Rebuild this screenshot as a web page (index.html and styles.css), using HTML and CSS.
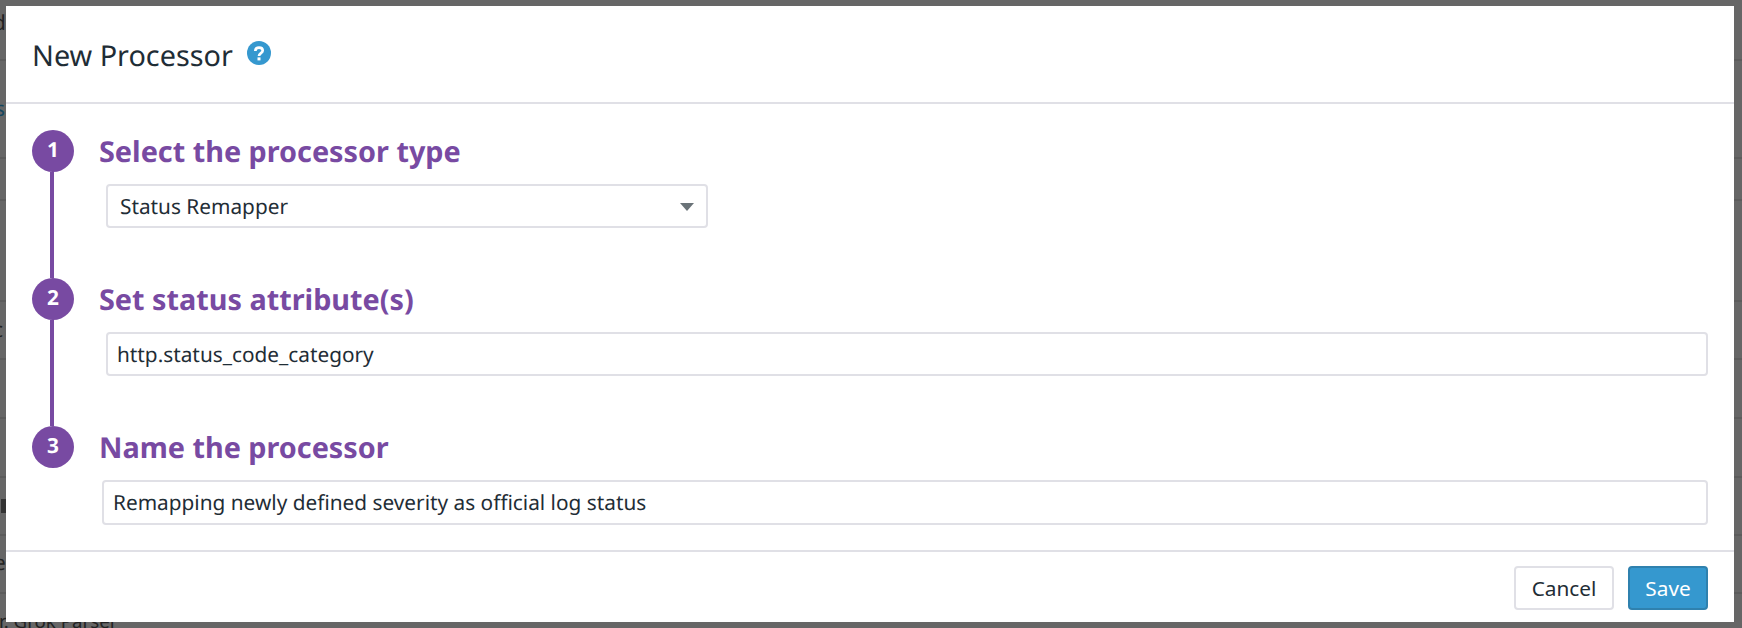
FILE: index.html
```html
<!DOCTYPE html>
<html lang="en">
<head>
    <meta charset="UTF-8">
    <meta name="viewport" content="width=device-width, initial-scale=1.0">
    <title>New Processor</title>
    <link rel="stylesheet" href="styles.css">
</head>
<body>
    <div class="backdrop">
        <span class="peek peek-d">d</span>
        <span class="peek peek-s">s</span>
        <span class="peek peek-c">c</span>
        <span class="peek peek-e">e</span>
        <span class="peek peek-grok">r. Grok Parser</span>
        <i class="peek-box"></i>
        <i class="rule" style="top: 59px"></i>
        <i class="rule" style="top: 157px"></i>
        <i class="rule" style="top: 199px"></i>
        <i class="rule" style="top: 300px"></i>
        <i class="rule" style="top: 358px"></i>
        <i class="rule" style="top: 417px"></i>
        <i class="rule" style="top: 476px"></i>
        <i class="rule" style="top: 534px"></i>
        <i class="rule" style="top: 592px"></i>
    </div>

    <div class="modal">
        <div class="modal-header">
            <h1 class="modal-title">New Processor</h1>
            <svg class="help-icon" viewBox="0 0 24 24" aria-hidden="true">
                <circle cx="12" cy="12" r="12" fill="#3598cf"/>
                <path d="M8.300 9.900c0-2.200 1.600-3.200 3.700-3.200 2.100 0 3.700 1.100 3.700 2.900 0 2.600-3.700 2.500-3.700 5.400" fill="none" stroke="#fff" stroke-width="2.700"/>
                <rect x="10.500" y="16.400" width="3" height="3" fill="#fff"/>
            </svg>
        </div>

        <div class="modal-body">
            <div class="step">
                <div class="step-rail">
                    <div class="step-num">1</div>
                    <div class="step-line"></div>
                </div>
                <div class="step-main">
                    <h2 class="step-title">Select the processor type</h2>
                    <div class="field select-field">
                        <span>Status Remapper</span>
                        <i class="caret"></i>
                    </div>
                </div>
            </div>

            <div class="step">
                <div class="step-rail">
                    <div class="step-num">2</div>
                    <div class="step-line"></div>
                </div>
                <div class="step-main">
                    <h2 class="step-title">Set status attribute(s)</h2>
                    <div class="field">http.status_code_category</div>
                </div>
            </div>

            <div class="step step-last">
                <div class="step-rail">
                    <div class="step-num">3</div>
                </div>
                <div class="step-main">
                    <h2 class="step-title">Name the processor</h2>
                    <div class="field field-name">Remapping newly defined severity as official log status</div>
                </div>
            </div>
        </div>

        <div class="modal-footer">
            <button class="btn">Cancel</button>
            <button class="btn btn-primary">Save</button>
        </div>
    </div>
</body>
</html>
```

FILE: styles.css
```css
* {
    box-sizing: border-box;
}

body {
    margin: 0;
    height: 100vh;
    overflow: hidden;
    position: relative;
    background: #666;
    font-family: "Noto Sans", sans-serif;
    color: #1f2d36;
    text-rendering: geometricPrecision;
}

/* page behind the dimmed overlay */
.backdrop {
    position: absolute;
    top: 0;
    left: 0;
    width: 100%;
    height: 100%;
}

.rule {
    position: absolute;
    left: 0;
    width: 100%;
    height: 2px;
    background: #5c5c5c;
}

.peek {
    position: absolute;
    font-size: 20.8px;
    line-height: 24px;
    color: #222;
}

.peek-d { left: -7px; top: 11px; }
.peek-s { left: -5px; top: 97px; color: #14465f; }
.peek-c { left: -7px; top: 318px; }
.peek-e { left: -6px; top: 551px; }
.peek-grok { left: -1px; top: 610px; font-size: 18.7px; }

.peek-box {
    position: absolute;
    left: 1px;
    top: 499px;
    width: 5px;
    height: 14px;
    background: #333;
}

.modal {
    position: absolute;
    top: 6px;
    left: 6px;
    width: 1728px;
    height: 616px;
    display: flex;
    flex-direction: column;
    background: #fff;
}

.modal-header {
    display: flex;
    align-items: center;
    height: 98px;
    padding: 0 26px;
    border-bottom: 2px solid #e0e0e6;
}

.modal-title {
    margin: 4px 0 0;
    font-size: 28.8px;
    font-weight: 400;
    line-height: 36px;
}

.help-icon {
    width: 24px;
    height: 24px;
    margin: -2px 0 0 14px;
}

.modal-body {
    flex: 1;
    padding: 26px 26px 0;
}

.step {
    display: flex;
    height: 148px;
}

.step-last {
    height: 120px;
}

.step-rail {
    display: flex;
    flex-direction: column;
    align-items: center;
    width: 42px;
    flex-shrink: 0;
}

.step-num {
    display: flex;
    justify-content: center;
    align-items: center;
    width: 42px;
    height: 42px;
    padding-bottom: 2px;
    border-radius: 50%;
    background: #784aa2;
    color: #fff;
    font-size: 20.8px;
    font-weight: 700;
    flex-shrink: 0;
}

.step-line {
    flex: 1;
    width: 4px;
    margin-right: 2px;
    background: #784aa2;
}

.step-main {
    flex: 1;
    padding-left: 25px;
}

.step-title {
    margin: 0 0 6px;
    height: 48px;
    padding-top: 2px;
    font-size: 28.8px;
    font-weight: 700;
    line-height: 40px;
    color: #784aa2;
}

.field {
    display: flex;
    align-items: center;
    height: 44px;
    margin-left: 7px;
    padding: 2px 9px 0;
    border: 2px solid #e0e0e6;
    border-radius: 4px;
    background: #fff;
    font-size: 20.8px;
    white-space: nowrap;
}

.select-field {
    justify-content: space-between;
    width: 602px;
    padding: 2px 12px 0;
}

.field-name {
    height: 45px;
    margin-left: 3px;
    padding-top: 0;
}

.caret {
    width: 0;
    height: 0;
    border-left: 7px solid transparent;
    border-right: 7px solid transparent;
    border-top: 8px solid #6a7378;
}

.modal-footer {
    display: flex;
    justify-content: flex-end;
    gap: 14px;
    height: 72px;
    padding: 14px 26px 0;
    border-top: 2px solid #e0e0e6;
}

.btn {
    height: 44px;
    width: 100px;
    padding: 0;
    border: 2px solid #e0e0e6;
    border-radius: 4px;
    background: #fff;
    color: #1f2d36;
    font-family: inherit;
    font-size: 20.8px;
}

.btn-primary {
    width: 80px;
    border-color: #2f81ae;
    background: #3598cf;
    color: #fff;
}
```
